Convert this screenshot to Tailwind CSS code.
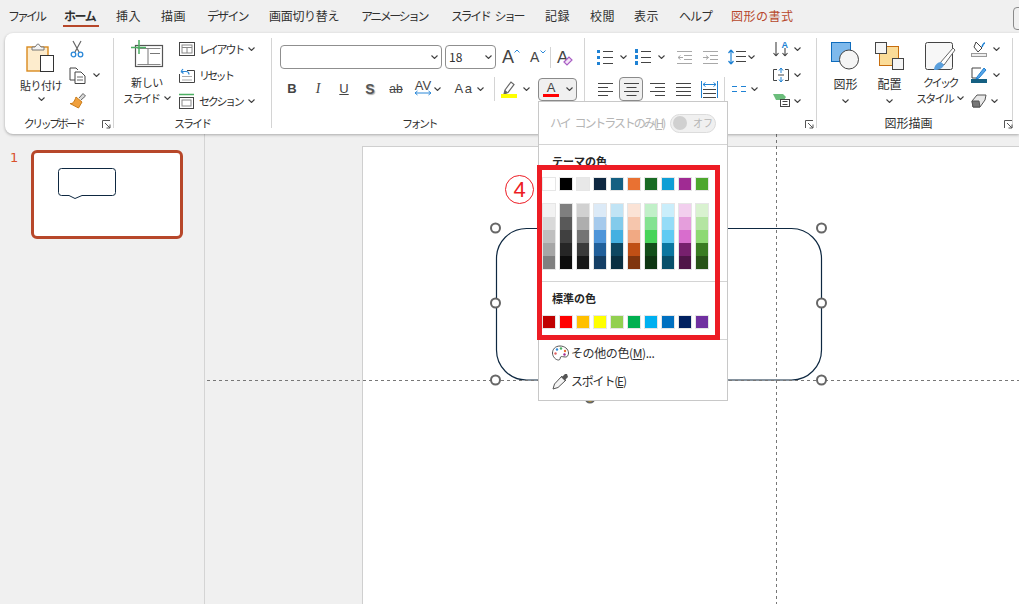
<!DOCTYPE html>
<html>
<head>
<meta charset="utf-8">
<script src="https://cdn.jsdelivr.net/npm/@tailwindcss/browser@4"></script>
<title>PowerPoint</title>
</head>
<body class="w-[1019px] h-[604px] overflow-hidden bg-[#f0f0f0] text-[#303030] text-[12px] font-['Noto_Sans_CJK_JP','Noto_Sans',sans-serif]">
<svg class="hidden">
  <symbol id="chev" viewBox="0 0 7 4"><path d="M.5.5 3.500 3.500 6.500.5" fill="none" stroke="#404040" stroke-width="1.100"/></symbol>
  <symbol id="launch" viewBox="0 0 9 9"><path d="M.5 8V.5H8M3 3l5 5M8 4.500V8H4.500" fill="none" stroke="#555" stroke-width="1"/></symbol>
</svg>
<div class="relative flex flex-col h-full">

  <!-- tabs -->
  <div class="relative flex h-[33px] items-center pl-[8px] pb-[1px] leading-none whitespace-nowrap">
    <span class="w-[56px] tracking-[-3px]">ファイル</span>
    <span class="relative w-[52px] font-bold tracking-[-1.500px]">ホーム<span class="absolute left-[-1px] right-[17px] top-[15px] h-[2px] bg-[#b7472a]"></span></span>
    <span class="w-[45px] tracking-[.5px]">挿入</span>
    <span class="w-[46px] tracking-[.5px]">描画</span>
    <span class="w-[62px] tracking-[-1.800px]">デザイン</span>
    <span class="w-[92px] tracking-[-.3px]">画面切り替え</span>
    <span class="w-[90px] tracking-[-2.500px]">アニメーション</span>
    <span class="w-[94px] tracking-[-2.400px]">スライド<span class="ml-[5px]">ショー</span></span>
    <span class="w-[45px] tracking-[.5px]">記録</span>
    <span class="w-[44px] tracking-[.5px]">校閲</span>
    <span class="w-[45px] tracking-[.5px]">表示</span>
    <span class="w-[52px] tracking-[-1px]">ヘルプ</span>
    <span class="text-[#b7472a] tracking-[.5px]">図形の書式</span>
    <span class="absolute left-[1013px] top-[7px] w-[10px] h-[23px] border border-[#8a8a8a] rounded-[4px]"></span>
  </div>

  <!-- ribbon -->
  <div class="relative z-10 flex h-[101px] ml-[5px] pt-[5px] bg-white rounded-l-[8px] shadow-[0_1px_3px_rgba(0,0,0,.3)] text-[11px] leading-[16px] whitespace-nowrap">

    <!-- clipboard -->
    <div class="relative flex flex-col w-[109px] h-[90px] border-r border-[#d4d4d4]">
      <div class="flex flex-1 pl-[11px]">
        <div class="flex flex-col items-center w-[50px]">
          <svg class="mt-[4px]" width="30" height="30" viewBox="0 0 30 30"><rect x="1" y="5" width="21" height="24" fill="#fdeccd" stroke="#d98a1e" stroke-width="1.400"/><path d="M6 8V5h3l2.500-3h1L15 5h3v3z" fill="#f4f4f4" stroke="#777"/><rect x="14.500" y="13.500" width="13" height="16" fill="#fff" stroke="#333"/></svg>
          <span class="mt-[5px] tracking-[-.5px]">貼り付け</span>
          <svg class="mt-[4px]" width="7" height="4"><use href="#chev"/></svg>
        </div>
        <div class="flex flex-col mt-[-2px] ml-[3px]">
          <div class="flex items-center h-[26px] pl-[1px]"><svg width="14" height="18" viewBox="0 0 14 18"><path d="M3 1l6 11M11 1 5 12" fill="none" stroke="#666" stroke-width="1.200"/><circle cx="3.500" cy="14.500" r="2.300" fill="none" stroke="#2b88d8" stroke-width="1.300"/><circle cx="10.500" cy="14.500" r="2.300" fill="none" stroke="#2b88d8" stroke-width="1.300"/></svg></div>
          <div class="flex items-center h-[26px]"><svg width="18" height="17" viewBox="0 0 18 17"><path d="M6 13H1V1h6l2 2M6 5h6l4 4v7.500H6z" fill="none" stroke="#444"/><path d="M8 10h6M8 13h6" stroke="#666"/></svg><svg class="ml-[6px]" width="7" height="4"><use href="#chev"/></svg></div>
          <div class="flex items-center h-[25px]"><svg width="18" height="17" viewBox="0 0 18 17"><path d="M10 6 14 1.500l2.500 2.500L12 8" fill="#d8d8d8" stroke="#666"/><path d="M7 5l6 5-3.500 6L1 11.500c3 .5 4.500-2 6-6.500z" fill="#f0a03c" stroke="#c97c1a"/></svg></div>
        </div>
      </div>
      <div class="h-[14px] text-center leading-[18px] pr-[11px] tracking-[-2.500px]">クリップボード</div>
      <svg class="absolute left-[97px] top-[82px]" width="9" height="9"><use href="#launch"/></svg>
    </div>

    <!-- slides -->
    <div class="flex flex-col w-[158px] h-[90px] border-r border-[#d4d4d4]">
      <div class="flex flex-1 pl-[8px]">
        <div class="flex flex-col items-center w-[50px]">
          <svg class="mt-[2px]" width="34" height="28" viewBox="0 0 34 28"><rect x="5.500" y="5.500" width="27" height="21" fill="#fff" stroke="#555" stroke-width="1.200"/><path d="M7.500 8.500h23M7.500 24.500h23" stroke="#888"/><path d="M18 8.500v16M20 13.500h10" stroke="#777"/><path d="M9 0v14M1 7.500h15" stroke="#4caf63" stroke-width="1.500"/></svg>
          <span class="mt-[6px] leading-[16px] tracking-[-.4px]">新しい</span>
          <span class="leading-[16px] tracking-[-2px] flex items-center">スライド<svg class="ml-[5px]" width="7" height="4"><use href="#chev"/></svg></span>
        </div>
        <div class="flex flex-col mt-[-2px] ml-[7px]">
          <div class="flex items-center h-[26px]"><svg width="16" height="15" viewBox="0 0 16 15"><rect x=".5" y=".5" width="15" height="13" fill="none" stroke="#444"/><rect x="3" y="3" width="10" height="8" fill="none" stroke="#888"/><path d="M3 5.500h10M8 5.500V11" stroke="#888"/></svg><span class="ml-[4px] tracking-[-2.200px]">レイアウト</span><svg class="ml-[5px]" width="7" height="4"><use href="#chev"/></svg></div>
          <div class="flex items-center h-[26px]"><svg width="16" height="16" viewBox="0 0 16 16"><path d="M.5 7v8.500h15v-12H8" fill="none" stroke="#444"/><path d="M3 9.500h10M3 13h10" stroke="#aaa"/><path d="M2 4.500 4 2M2 4.500 4.500 6.500M2 4.500h5c2 0 3 1 3 3" fill="none" stroke="#2b88d8" stroke-width="1.200"/></svg><span class="ml-[4px] tracking-[-2.700px]">リセット</span></div>
          <div class="flex items-center h-[25px]"><svg width="16" height="16" viewBox="0 0 16 16"><path d="M0 1.500h15" stroke="#4caf63" stroke-width="1.500"/><rect x=".5" y="4.500" width="14" height="11" fill="none" stroke="#444"/><rect x="3" y="7" width="9" height="6" fill="none" stroke="#888"/></svg><span class="ml-[4px] tracking-[-2.300px]">セクション</span><svg class="ml-[5px]" width="7" height="4"><use href="#chev"/></svg></div>
        </div>
      </div>
      <div class="h-[14px] text-center leading-[18px] pr-[1px] tracking-[-2px]">スライド</div>
    </div>

    <!-- font -->
    <div class="flex flex-col w-[313px] h-[90px] border-r border-[#d4d4d4]">
      <div class="flex flex-col flex-1">
        <div class="flex items-center h-[24px] mt-[7px] pl-[8px]">
          <div class="flex items-center justify-end w-[162px] h-[24px] pr-[3px] border border-[#8f8f8f] rounded-[4px]"><svg width="7" height="4"><use href="#chev"/></svg></div>
          <div class="flex items-center justify-between w-[51px] h-[24px] ml-[3px] pl-[3px] pr-[3px] border border-[#8f8f8f] rounded-[4px] text-[12px]">18<svg width="7" height="4"><use href="#chev"/></svg></div>
          <span class="relative ml-[6px] w-[18px] text-[18px] leading-none font-['Liberation_Sans'] text-[#444]">A<svg class="absolute left-[12px] top-[1px]" width="6" height="4" viewBox="0 0 6 4"><path d="M.5 3.500 3 1l2.500 2.500" fill="none" stroke="#2b88d8"/></svg></span>
          <span class="relative ml-[10px] w-[17px] text-[14px] leading-none font-['Liberation_Sans'] text-[#444]">A<svg class="absolute left-[10px] top-[0px]" width="6" height="4" viewBox="0 0 6 4"><path d="M.5.500 3 3 5.500.5" fill="none" stroke="#2b88d8"/></svg></span>
          <span class="w-[1px] h-[21px] ml-[3px] bg-[#d4d4d4]"></span>
          <span class="relative ml-[6px] w-[17px] text-[17px] leading-none font-['Liberation_Sans'] text-[#444]">A<svg class="absolute left-[6px] top-[7px]" width="10" height="10" viewBox="0 0 10 10"><path d="M1 6 6 1l3 3-5 5z" fill="#f4e4f7" stroke="#a95fc4" stroke-width="1.200"/></svg></span>
        </div>
        <div class="flex items-center h-[24px] mt-[8px] pl-[7px] font-['Liberation_Sans'] text-[#444]">
          <span class="w-[26px] text-center text-[13px] font-bold">B</span>
          <span class="w-[26px] text-center text-[14px] italic font-['Liberation_Serif']">I</span>
          <span class="w-[26px] text-center text-[13px] underline">U</span>
          <span class="w-[26px] text-center text-[14px] font-bold text-[#555] [text-shadow:1px_1px_1px_#aaa]">S</span>
          <span class="w-[26px] text-center text-[12px] line-through">ab</span>
          <span class="relative w-[28px] text-center text-[13px] leading-none pb-[7px]">AV<svg class="absolute left-[5px] top-[11px]" width="18" height="6" viewBox="0 0 18 6"><path d="M1 3h16M1 3l2.500-2M1 3l2.500 2M17 3l-2.500-2M17 3l-2.500 2" fill="none" stroke="#2b88d8"/></svg></span>
          <svg class="ml-[-3px]" width="7" height="4"><use href="#chev"/></svg>
          <span class="w-[26px] ml-[10px] text-center text-[13px] tracking-[1.500px]">Aa</span>
          <svg width="7" height="4"><use href="#chev"/></svg>
          <span class="w-[1px] h-[24px] ml-[10px] bg-[#d4d4d4]"></span>
          <svg class="ml-[6px]" width="17" height="18" viewBox="0 0 17 18"><path d="M4 10 10 2l3 2.500-6 8-4 1.500z" fill="#fff" stroke="#666" stroke-width="1.200"/><path d="M4 10l3 2.500-4 1.500z" fill="#666"/><rect y="14" width="16" height="4" fill="#ffff00"/></svg>
          <svg class="ml-[5px]" width="7" height="4"><use href="#chev"/></svg>
          <div class="flex items-center w-[39px] h-[23px] ml-[8px] pl-[4px] bg-[#f0f0f0] border border-[#8a8a8a] rounded-[4px]">
            <span class="flex flex-col items-center w-[16px] text-[13px] leading-[13px]">A<span class="w-[16px] h-[3.500px] bg-[#ff0000]"></span></span>
            <svg class="ml-[7px]" width="7" height="4"><use href="#chev"/></svg>
          </div>
        </div>
      </div>
      <div class="h-[14px] text-center leading-[18px] tracking-[-2.500px] pr-[18px]">フォント</div>
    </div>

    <!-- paragraph -->
    <div class="relative flex w-[232px] h-[90px] border-r border-[#d4d4d4]">
      <div class="flex flex-col w-[188px]">
        <div class="flex items-center h-[24px] mt-[7px] pl-[12px]">
          <svg width="16" height="15" viewBox="0 0 16 15"><path d="M0 0h3v3H0zM0 6h3v3H0zM0 12h3v3H0z" fill="#1f82d4"/><path d="M6 1.500h10M6 7.500h10M6 13.500h10" stroke="#444"/></svg>
          <svg class="ml-[7px]" width="7" height="4"><use href="#chev"/></svg>
          <svg class="ml-[8px]" width="16" height="16" viewBox="0 0 16 16"><path d="M0 0h3v4H0zM0 6h3v4H0zM0 12h3v4H0z" fill="#1f82d4"/><path d="M6 2.500h10M6 8.500h10M6 13.500h10" stroke="#444"/></svg>
          <svg class="ml-[7px]" width="7" height="4"><use href="#chev"/></svg>
          <svg class="ml-[12px]" width="15" height="13" viewBox="0 0 15 13"><path d="M0 .5h15M7 4.500h8M7 8.500h8M0 12.500h15M6 6.500H1M1 6.500l2.500-2M1 6.500l2.500 2" fill="none" stroke="#a8a8a8"/></svg>
          <svg class="ml-[11px]" width="15" height="13" viewBox="0 0 15 13"><path d="M0 .5h15M7 4.500h8M7 8.500h8M0 12.500h15M0 6.500h5.500M5.500 6.500 3 4.500M5.500 6.500 3 8.500" fill="none" stroke="#a8a8a8"/></svg>
          <svg class="ml-[10px]" width="18" height="16" viewBox="0 0 18 16"><path d="M3 1v14M3 1 .5 4M3 1l2.500 3M3 15 .5 12M3 15l2.500-3" fill="none" stroke="#1f82d4" stroke-width="1.200"/><path d="M8 2.500h10M8 7.500h10M8 12.500h10" stroke="#444"/></svg>
          <svg class="ml-[2px]" width="7" height="4"><use href="#chev"/></svg>
        </div>
        <div class="flex items-center h-[24px] mt-[8px] pl-[13px]">
          <svg width="15" height="13" viewBox="0 0 15 13"><path d="M0 .5h15M0 4.500h10M0 8.500h15M0 12.500h10" stroke="#444"/></svg>
          <div class="flex items-center justify-center w-[24px] h-[24px] ml-[6px] bg-[#f0f0f0] border border-[#8a8a8a] rounded-[4px]"><svg width="15" height="13" viewBox="0 0 15 13"><path d="M0 .5h15M2.500 4.500h10M0 8.500h15M2.500 12.500h10" stroke="#444"/></svg></div>
          <svg class="ml-[7px]" width="15" height="13" viewBox="0 0 15 13"><path d="M0 .5h15M5 4.500h10M0 8.500h15M5 12.500h10" stroke="#444"/></svg>
          <svg class="ml-[11px]" width="15" height="13" viewBox="0 0 15 13"><path d="M0 .5h15M0 4.500h15M0 8.500h15M0 12.500h15" stroke="#444"/></svg>
          <svg class="ml-[10px]" width="17" height="17" viewBox="0 0 17 17"><path d="M.5 0v17M16.500 0v17" stroke="#1f82d4"/><path d="M2 3.500h13M2 3.500l2.500-2M2 3.500l2.500 2M15 3.500l-2.500-2M15 3.500l-2.500 2" fill="none" stroke="#1f82d4"/><path d="M2 8.500h13M2 12.500h13M2 16.500h13" stroke="#444"/></svg>
          <span class="w-[1px] h-[24px] ml-[6px] bg-[#d4d4d4]"></span>
          <svg class="ml-[7px]" width="14" height="8" viewBox="0 0 14 8"><path d="M0 1.500h5M9 1.500h5M0 6.500h5M9 6.500h5" stroke="#1f82d4" stroke-width="1.200"/></svg>
          <svg class="ml-[5px]" width="7" height="4"><use href="#chev"/></svg>
        </div>
      </div>
      <div class="flex flex-col mt-[-2px]">
        <div class="flex items-center h-[26px]"><svg width="16" height="18" viewBox="0 0 16 18"><path d="M3 2v14M3 16 .5 13M3 16l2.500-3M12 8v8M12 16l-2.500-3M12 16l2.500-3" fill="none" stroke="#444" stroke-width="1.100"/><text x="8.500" y="8" font-size="9" font-weight="700" fill="#1f82d4" font-family="Liberation Sans">A</text></svg><svg class="ml-[5px]" width="7" height="4"><use href="#chev"/></svg></div>
        <div class="flex items-center h-[26px]"><svg width="16" height="15" viewBox="0 0 16 15"><path d="M4 1.500H.5v11H4M12 1.500h3.500v11H12M5 7h6" fill="none" stroke="#444"/><path d="M8 0v5M8 0 6 2.500M8 0l2 2.500M8 14V9M8 14l-2-2.500M8 14l2-2.500" fill="none" stroke="#1f82d4"/></svg><svg class="ml-[5px]" width="7" height="4"><use href="#chev"/></svg></div>
        <div class="flex items-center h-[25px]"><svg width="17" height="13" viewBox="0 0 17 13"><path d="M0 0h10l3 3-2 3H3z" fill="#6bbd7b"/><rect x="7.500" y="5.500" width="9" height="7" fill="#fff" stroke="#444"/><path d="M9.500 7.500h5M9.500 10.500h5" stroke="#444"/></svg><svg class="ml-[4px]" width="7" height="4"><use href="#chev"/></svg></div>
      </div>
      <svg class="absolute left-[220px] top-[82px]" width="9" height="9"><use href="#launch"/></svg>
    </div>

    <!-- drawing -->
    <div class="relative flex flex-col w-[196px] h-[90px] border-r border-[#d4d4d4]">
      <div class="flex flex-1 pl-[14px]">
        <div class="flex flex-col items-center w-[29px]">
          <svg class="mt-[4px]" width="29" height="28" viewBox="0 0 29 28"><rect x=".5" y=".5" width="19" height="19" fill="#7eb9ec" stroke="#0f6cbd"/><circle cx="18" cy="17.500" r="9.500" fill="#f5f5f5" stroke="#444"/></svg>
          <span class="mt-[6px] text-[12px]">図形</span>
          <svg class="mt-[7px]" width="7" height="4"><use href="#chev"/></svg>
        </div>
        <div class="flex flex-col items-center w-[29px] ml-[15px]">
          <svg class="mt-[4px]" width="29" height="28" viewBox="0 0 29 28"><rect x="4.500" y="4.500" width="19" height="19" fill="#fbdc98" stroke="#c76d0e"/><rect x=".5" y=".5" width="11" height="11" fill="#f5f5f5" stroke="#444"/><rect x="17.500" y="16.500" width="11" height="11" fill="#f5f5f5" stroke="#444"/></svg>
          <span class="mt-[6px] text-[12px]">配置</span>
          <svg class="mt-[7px]" width="7" height="4"><use href="#chev"/></svg>
        </div>
        <div class="flex flex-col items-center w-[52px] ml-[10px]">
          <svg class="mt-[4px]" width="31" height="30" viewBox="0 0 31 30"><rect x=".5" y=".5" width="27" height="27" rx="2" fill="#f7f7f7" stroke="#444"/><path d="M15 21 28 6l2 2-11 15z" fill="#fff" stroke="#666"/><path d="M9 28c0-5 4-8 7-8l3 3c-1 3-5 5-10 5z" fill="#5a9fdc"/></svg>
          <span class="mt-[2px] leading-[16px] tracking-[-2.500px]">クイック</span>
          <span class="leading-[16px] tracking-[-1.800px] flex items-center">スタイル<svg class="ml-[4px]" width="7" height="4"><use href="#chev"/></svg></span>
        </div>
        <div class="flex flex-col mt-[-2px] ml-[5px]">
          <div class="flex items-center h-[26px]"><svg width="16" height="16" viewBox="0 0 16 16"><path d="M5 1 11 7l-4 4-4-5z" fill="#fff" stroke="#444"/><path d="M11 6c1-3 2-4 3-4" fill="none" stroke="#1f82d4" stroke-width="1.500"/><rect x=".5" y="12.500" width="15" height="3" fill="#eee" stroke="#999"/></svg><svg class="ml-[6px]" width="7" height="4"><use href="#chev"/></svg></div>
          <div class="flex items-center h-[26px]"><svg width="16" height="16" viewBox="0 0 16 16"><path d="M1 1h9M1 1v10h6" fill="none" stroke="#444"/><path d="M6 10 13 1l2 2-7 8-3 1z" fill="#5aa5e6" stroke="#1f82d4"/><rect y="12" width="16" height="4" fill="#156082"/></svg><svg class="ml-[6px]" width="7" height="4"><use href="#chev"/></svg></div>
          <div class="flex items-center h-[25px]"><svg width="16" height="14" viewBox="0 0 16 14"><path d="M1 7 6 1h9l-1 5-5 7H2z" fill="#e8e8e8" stroke="#555"/><path d="M1 7h7l1 6H2z" fill="#777" stroke="#555"/></svg><svg class="ml-[4px]" width="7" height="4"><use href="#chev"/></svg></div>
        </div>
      </div>
      <div class="h-[14px] text-center leading-[18px] pr-[12px] text-[12px]">図形描画</div>
      <svg class="absolute left-[187px] top-[82px]" width="9" height="9"><use href="#launch"/></svg>
    </div>
  </div>

  <!-- panes -->
  <div class="flex flex-1">
    <div class="flex w-[205px] border-r border-[#d4d4d4] pt-[16px] pl-[10px]">
      <span class="w-[21px] text-[13px] leading-[16px] text-[#d9512c] font-['DejaVu_Sans']">1</span>
      <div class="relative w-[152px] h-[89px] bg-white border-[3px] border-[#b7472a] rounded-[6px]">
        <svg class="absolute left-[24px] top-[15px]" width="60" height="34" viewBox="0 0 60 34"><path d="M3.500.5h51a3 3 0 0 1 3 3v21a3 3 0 0 1-3 3H24l-7 3-6-3H3.500a3 3 0 0 1-3-3v-21a3 3 0 0 1 3-3z" fill="#fff" stroke="#0e2841"/></svg>
      </div>
    </div>
    <div class="relative flex-1">
      <div class="absolute left-[157px] top-[12px] right-0 bottom-0 bg-white border-l border-t border-[#cfcfcf]"></div>
      <svg class="absolute left-0 top-0" width="814" height="470" viewBox="205 134 814 470">
        <rect x="496.500" y="228.500" width="325" height="151.500" rx="30" fill="#fff" stroke="#0e2841" stroke-width="1.200"/>
        <path d="M207 380.500H1019M776.500 134V604" stroke="#777" stroke-dasharray="3 3"/>
        <circle cx="590" cy="398" r="4.500" fill="#ffc000" stroke="#666" stroke-width="2"/>
        <g fill="#fff" stroke="#666" stroke-width="2">
          <circle cx="495.500" cy="228" r="4.500"/><circle cx="821.500" cy="228" r="4.500"/>
          <circle cx="495.500" cy="303" r="4.500"/><circle cx="821.500" cy="303" r="4.500"/>
          <circle cx="495.500" cy="380" r="4.500"/><circle cx="821.500" cy="380" r="4.500"/>
        </g>
      </svg>
    </div>
  </div>

  <!-- colour menu -->
  <div class="absolute z-20 left-[538px] top-[101px] flex flex-col w-[190px] h-[300px] bg-white border border-[#c8c8c8] text-[12px] leading-[16px] whitespace-nowrap">
    <div class="flex items-center h-[42px] pl-[11px] text-[#b5b5b5]">
      <span class="w-[120px] tracking-[-2.100px]">ハイ<span class="ml-[5px]">コントラストのみ(<span class="underline">H</span>)</span></span>
      <span class="flex items-center w-[46px] h-[19px] pl-[2px] bg-[#f0f0f0] border border-[#dcdcdc] rounded-full text-[10px]"><span class="w-[14px] h-[14px] rounded-full bg-[#d0d0d0]"></span><span class="ml-[6px]">オフ</span></span>
    </div>
    <div class="h-[1px] bg-[#d4d4d4]"></div>
    <div class="mt-[8px] pl-[13px] font-bold text-[11px] text-[#262626]">テーマの色</div>
    <div class="flex gap-[3px] mt-[8px] pl-[3px]">
      <span class="w-[14px] h-[14px] border border-[#e6e6e6] bg-[#ffffff]"></span>
      <span class="w-[14px] h-[14px] border border-[#e6e6e6] bg-[#000000]"></span>
      <span class="w-[14px] h-[14px] border border-[#e6e6e6] bg-[#e8e8e8]"></span>
      <span class="w-[14px] h-[14px] border border-[#e6e6e6] bg-[#0e2841]"></span>
      <span class="w-[14px] h-[14px] border border-[#e6e6e6] bg-[#156082]"></span>
      <span class="w-[14px] h-[14px] border border-[#e6e6e6] bg-[#e97132]"></span>
      <span class="w-[14px] h-[14px] border border-[#e6e6e6] bg-[#196b24]"></span>
      <span class="w-[14px] h-[14px] border border-[#e6e6e6] bg-[#0f9ed5]"></span>
      <span class="w-[14px] h-[14px] border border-[#e6e6e6] bg-[#a02b93]"></span>
      <span class="w-[14px] h-[14px] border border-[#e6e6e6] bg-[#4ea72e]"></span>
    </div>
    <div class="flex gap-[3px] mt-[12px] pl-[3px]">
      <div class="flex flex-col w-[14px] h-[67px] border border-[#e6e6e6]"><span class="h-[13px] bg-[#f2f2f2]"></span><span class="h-[13px] bg-[#d9d9d9]"></span><span class="h-[13px] bg-[#bfbfbf]"></span><span class="h-[13px] bg-[#a6a6a6]"></span><span class="h-[13px] bg-[#808080]"></span></div>
      <div class="flex flex-col w-[14px] h-[67px] border border-[#e6e6e6]"><span class="h-[13px] bg-[#7f7f7f]"></span><span class="h-[13px] bg-[#595959]"></span><span class="h-[13px] bg-[#404040]"></span><span class="h-[13px] bg-[#262626]"></span><span class="h-[13px] bg-[#0d0d0d]"></span></div>
      <div class="flex flex-col w-[14px] h-[67px] border border-[#e6e6e6]"><span class="h-[13px] bg-[#d1d1d1]"></span><span class="h-[13px] bg-[#aeaeae]"></span><span class="h-[13px] bg-[#747474]"></span><span class="h-[13px] bg-[#3a3a3a]"></span><span class="h-[13px] bg-[#171717]"></span></div>
      <div class="flex flex-col w-[14px] h-[67px] border border-[#e6e6e6]"><span class="h-[13px] bg-[#dceaf7]"></span><span class="h-[13px] bg-[#a6caec]"></span><span class="h-[13px] bg-[#4e95d9]"></span><span class="h-[13px] bg-[#215f9a]"></span><span class="h-[13px] bg-[#153e64]"></span></div>
      <div class="flex flex-col w-[14px] h-[67px] border border-[#e6e6e6]"><span class="h-[13px] bg-[#c1e4f5]"></span><span class="h-[13px] bg-[#83cbeb]"></span><span class="h-[13px] bg-[#45b0e1]"></span><span class="h-[13px] bg-[#0f4761]"></span><span class="h-[13px] bg-[#0a2f41]"></span></div>
      <div class="flex flex-col w-[14px] h-[67px] border border-[#e6e6e6]"><span class="h-[13px] bg-[#fbe3d6]"></span><span class="h-[13px] bg-[#f6c6ad]"></span><span class="h-[13px] bg-[#f1a983]"></span><span class="h-[13px] bg-[#c04f15]"></span><span class="h-[13px] bg-[#80350e]"></span></div>
      <div class="flex flex-col w-[14px] h-[67px] border border-[#e6e6e6]"><span class="h-[13px] bg-[#c1f0c8]"></span><span class="h-[13px] bg-[#84e291]"></span><span class="h-[13px] bg-[#47d45a]"></span><span class="h-[13px] bg-[#124f1a]"></span><span class="h-[13px] bg-[#0d3512]"></span></div>
      <div class="flex flex-col w-[14px] h-[67px] border border-[#e6e6e6]"><span class="h-[13px] bg-[#caeefb]"></span><span class="h-[13px] bg-[#95dcf7]"></span><span class="h-[13px] bg-[#61cbf3]"></span><span class="h-[13px] bg-[#0b769f]"></span><span class="h-[13px] bg-[#074f6a]"></span></div>
      <div class="flex flex-col w-[14px] h-[67px] border border-[#e6e6e6]"><span class="h-[13px] bg-[#f2cfee]"></span><span class="h-[13px] bg-[#e59edc]"></span><span class="h-[13px] bg-[#d86dcd]"></span><span class="h-[13px] bg-[#77206d]"></span><span class="h-[13px] bg-[#4f1548]"></span></div>
      <div class="flex flex-col w-[14px] h-[67px] border border-[#e6e6e6]"><span class="h-[13px] bg-[#d9f2d0]"></span><span class="h-[13px] bg-[#b4e5a2]"></span><span class="h-[13px] bg-[#8ed973]"></span><span class="h-[13px] bg-[#3a7c22]"></span><span class="h-[13px] bg-[#275317]"></span></div>
    </div>
    <div class="h-[1px] mt-[11px] bg-[#d4d4d4]"></div>
    <div class="mt-[8px] pl-[13px] font-bold text-[11px] text-[#262626]">標準の色</div>
    <div class="flex gap-[3px] mt-[9px] pl-[3px]">
      <span class="w-[14px] h-[14px] border border-[#e6e6e6] bg-[#c00000]"></span>
      <span class="w-[14px] h-[14px] border border-[#e6e6e6] bg-[#ff0000]"></span>
      <span class="w-[14px] h-[14px] border border-[#e6e6e6] bg-[#ffc000]"></span>
      <span class="w-[14px] h-[14px] border border-[#e6e6e6] bg-[#ffff00]"></span>
      <span class="w-[14px] h-[14px] border border-[#e6e6e6] bg-[#92d050]"></span>
      <span class="w-[14px] h-[14px] border border-[#e6e6e6] bg-[#00b050]"></span>
      <span class="w-[14px] h-[14px] border border-[#e6e6e6] bg-[#00b0f0]"></span>
      <span class="w-[14px] h-[14px] border border-[#e6e6e6] bg-[#0070c0]"></span>
      <span class="w-[14px] h-[14px] border border-[#e6e6e6] bg-[#002060]"></span>
      <span class="w-[14px] h-[14px] border border-[#e6e6e6] bg-[#7030a0]"></span>
    </div>
    <div class="h-[1px] mt-[10px] bg-[#d4d4d4]"></div>
    <div class="flex items-center h-[25px] pl-[13px]">
      <svg width="17" height="16" viewBox="0 0 17 16"><path d="M8 1C3 1 .5 4.500.5 8s3 7 6 7c2 0 1.500-2 2-3s3 0 5 0 3-2 3-4c0-4-4-7-8.500-7z" fill="#fff" stroke="#555"/><circle cx="5" cy="4.500" r="1.200" fill="#2b88d8"/><circle cx="9" cy="3.500" r="1.200" fill="#4caf63"/><circle cx="13" cy="6" r="1.200" fill="#e97132"/><circle cx="3.500" cy="8.500" r="1.200" fill="#e06060"/><circle cx="12.500" cy="9.500" r="1.200" fill="#a02b93"/></svg>
      <span class="ml-[2px] tracking-[-.4px]">その他の色(<span class="underline">M</span>)...</span>
    </div>
    <div class="flex items-center h-[28px] mt-[2px] pl-[13px]">
      <svg width="17" height="17" viewBox="0 0 17 17"><path d="M10 3 2.500 11 1 16l5-1.500L14 7" fill="#f4f4f4" stroke="#555"/><path d="M9 4 13 8l1-2 2-2-1-3-2 0-2 2z" fill="#555"/></svg>
      <span class="ml-[2px] tracking-[-1.200px]">スポイト(<span class="underline">E</span>)</span>
    </div>
  </div>

  <!-- annotation -->
  <div class="absolute z-30 left-[537px] top-[165px] w-[183px] h-[175px] border-[5px] border-[#ed1c24]"></div>
  <span class="absolute z-30 left-[505px] top-[175px] flex items-center justify-center w-[29px] h-[29px] rounded-full border border-[#ed1c24] text-[22px] leading-none text-[#ed1c24] font-['Liberation_Sans']">4</span>
</div>
</body>
</html>
